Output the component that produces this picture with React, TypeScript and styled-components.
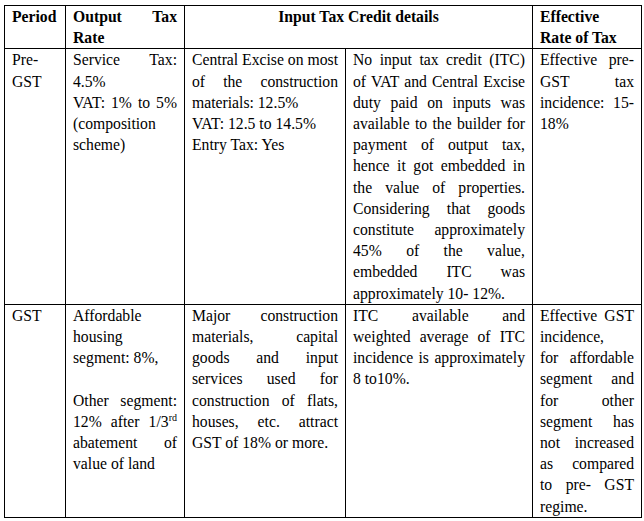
import React from "react";
import styled, { createGlobalStyle } from "styled-components";

const Global = createGlobalStyle`
  html, body { margin: 0; padding: 0; background: #fff; }
  body { padding: 5px 0 0 4px; }
`;

const Table = styled.table`
  border-collapse: collapse;
  table-layout: fixed;
  width: 637px;
  font-family: "Liberation Serif", "Times New Roman", serif;
  font-size: 15.7px;
  line-height: 21.2px;
  color: #000;
`;

const Col = styled.col<{ $w: number }>`
  width: ${(p) => p.$w}px;
`;

const Head = styled.th<{ $align?: string }>`
  border: 1px solid #000;
  padding: 0 7px;
  font-weight: bold;
  vertical-align: top;
  text-align: ${(p) => p.$align || "left"};
  text-align-last: ${(p) => (p.$align === "justify" ? "left" : "auto")};
`;

const Cell = styled.td`
  border: 1px solid #000;
  padding: 0 7px;
  vertical-align: top;
  text-align: justify;
  text-align-last: left;
`;

const Para = styled.div<{ $gap?: boolean }>`
  margin-top: ${(p) => (p.$gap ? "21.2px" : "0")};
`;

const Sup = styled.sup`
  font-size: 10px;
  line-height: 0;
  vertical-align: 6px;
`;

export default function App() {
  return (
    <>
      <Global />
      <Table>
        <colgroup>
          <Col $w={61} />
          <Col $w={119} />
          <Col $w={161} />
          <Col $w={187} />
          <Col $w={109} />
        </colgroup>
        <thead>
          <tr>
            <Head>Period</Head>
            <Head $align="justify">Output Tax Rate</Head>
            <Head colSpan={2} $align="center">
              Input Tax Credit details
            </Head>
            <Head>Effective Rate of Tax</Head>
          </tr>
        </thead>
        <tbody>
          <tr>
            <Cell>Pre-GST</Cell>
            <Cell>
              <Para>Service Tax: 4.5%</Para>
              <Para>VAT: 1% to 5% (composition scheme)</Para>
            </Cell>
            <Cell>
              <Para>Central Excise on most of the construction materials: 12.5%</Para>
              <Para>VAT: 12.5 to 14.5%</Para>
              <Para>Entry Tax: Yes</Para>
            </Cell>
            <Cell>
              No input tax credit (ITC) of VAT and Central Excise duty paid on
              inputs was available to the builder for payment of output tax,
              hence it got embedded in the value of properties. Considering that
              goods constitute approximately 45% of the value, embedded ITC was
              approximately 10- 12%.
            </Cell>
            <Cell>Effective pre-GST tax incidence: 15-18%</Cell>
          </tr>
          <tr>
            <Cell>GST</Cell>
            <Cell>
              <Para>Affordable housing segment: 8%,</Para>
              <Para $gap>
                Other segment: 12% after 1/3<Sup>rd</Sup> abatement of value of land
              </Para>
            </Cell>
            <Cell>
              Major construction materials, capital goods and input services
              used for construction of flats, houses, etc. attract GST of 18% or
              more.
            </Cell>
            <Cell>
              ITC available and weighted average of ITC incidence is
              approximately 8 to10%.
            </Cell>
            <Cell>
              <Para>Effective GST incidence,</Para>
              <Para>
                for affordable segment and for other segment has not increased
                as compared to pre- GST regime.
              </Para>
            </Cell>
          </tr>
        </tbody>
      </Table>
    </>
  );
}
